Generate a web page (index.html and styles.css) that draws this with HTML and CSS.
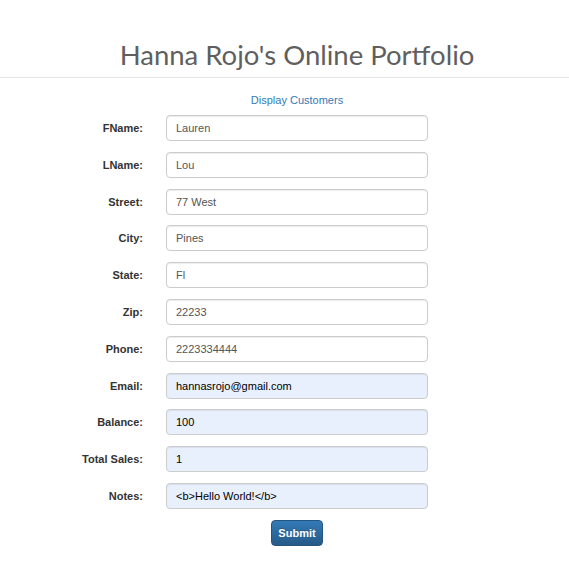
FILE: index.html
```html
<!DOCTYPE html>
<html>
<head>
<meta charset="utf-8">
<link rel="stylesheet" href="styles.css">
</head>
<body>
<header class="site-header">
  <h1 class="site-title">Hanna Rojo's Online Portfolio</h1>
</header>
<main class="content">
  <nav class="links"><a href="#" class="link">Display Customers</a></nav>
  <form class="customer-form">
    <label class="field-label">FName:</label><input class="field" value="Lauren">
    <label class="field-label">LName:</label><input class="field" value="Lou">
    <label class="field-label">Street:</label><input class="field" value="77 West">
    <label class="field-label">City:</label><input class="field" value="Pines">
    <label class="field-label">State:</label><input class="field" value="Fl">
    <label class="field-label">Zip:</label><input class="field" value="22233">
    <label class="field-label">Phone:</label><input class="field" value="2223334444">
    <label class="field-label">Email:</label><input class="field filled" value="hannasrojo@gmail.com">
    <label class="field-label">Balance:</label><input class="field filled" value="100">
    <label class="field-label">Total Sales:</label><input class="field filled" value="1">
    <label class="field-label">Notes:</label><input class="field filled" value="<b>Hello World!</b>">
    <div class="actions"><button type="button" class="btn-submit">Submit</button></div>
  </form>
</main>
</body>
</html>
```
FILE: styles.css
```css
html, body {
  margin: 0;
  padding: 0;
  background: #fff;
  font-family: "Liberation Sans", Arial, sans-serif;
  font-size: 11px;
  color: #333;
}
.site-header {
  border-bottom: 1px solid #e6e6e6;
  padding: 36px 0 0 25px;
  height: 41px;
}
.site-title {
  margin: 0;
  text-align: center;
  font-family: Lato, sans-serif;
  font-weight: 400;
  font-size: 27.5px;
  line-height: 38px;
  color: #5f5f5f;
}
.content {
  padding-top: 14px;
}
.links {
  text-align: center;
  padding-left: 25px;
  line-height: 16px;
  margin-bottom: 7px;
}
.link {
  color: #337ab7;
  text-decoration: none;
  font-size: 11px;
}
.customer-form {
  display: grid;
  grid-template-columns: 143px 262px;
  column-gap: 23px;
  row-gap: 10.8px;
  align-items: center;
}
.field-label {
  text-align: right;
  font-weight: bold;
  font-size: 11px;
  color: #333;
}
.field {
  box-sizing: border-box;
  height: 26px;
  width: 262px;
  border: 1px solid #ccc;
  border-radius: 4px;
  padding: 0 9px;
  font-family: "Liberation Sans", Arial, sans-serif;
  font-size: 11px;
  color: #555;
  background: #fff;
  box-shadow: inset 0 1px 1px rgba(0,0,0,0.075);
  outline: none;
}
.field.filled {
  background: #e8f0fe;
  color: #000;
}
.actions {
  grid-column: 1 / span 2;
  padding-left: 271px;
}
.btn-submit {
  width: 52px;
  height: 26px;
  padding: 0;
  border: 1px solid #245580;
  border-radius: 4px;
  background: linear-gradient(#337ab7, #265a88);
  color: #fff;
  font-family: "Liberation Sans", Arial, sans-serif;
  font-weight: bold;
  font-size: 11px;
  text-shadow: 0 -1px 0 rgba(0,0,0,0.2);
}
```
